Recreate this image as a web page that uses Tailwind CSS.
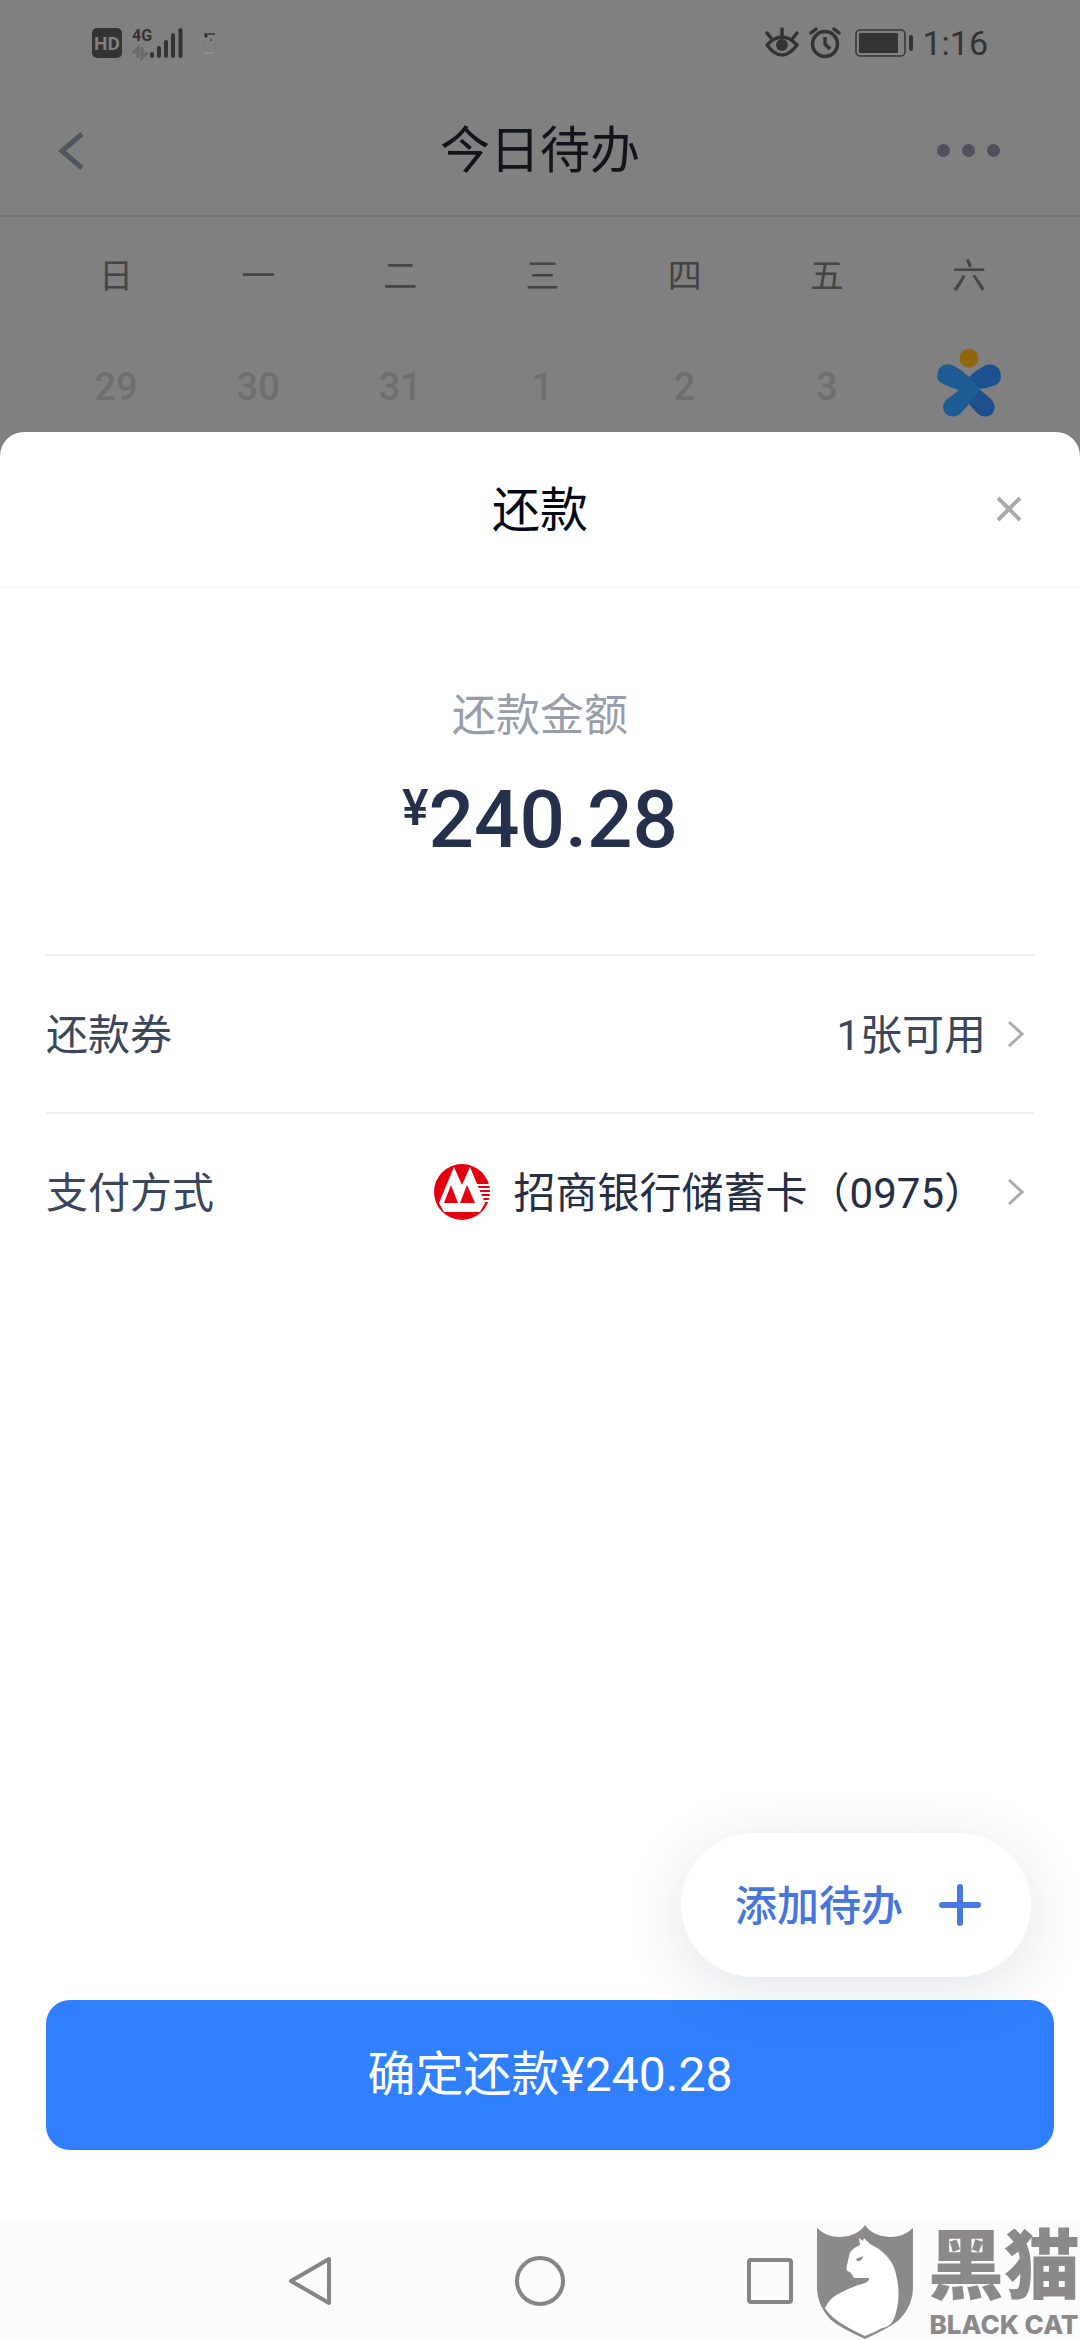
<!DOCTYPE html>
<html lang="zh-CN">
<head>
<meta charset="utf-8">
<meta name="viewport" content="width=device-width, initial-scale=1">
<title>还款</title>
<script src="https://cdn.jsdelivr.net/npm/@tailwindcss/browser@4"></script>
</head>
<body class="flex min-h-screen flex-col bg-[#808080] font-[Roboto,'Noto_Sans_CJK_SC',sans-serif]">

  <!-- Status bar -->
  <div class="flex h-[86px] items-center justify-between px-[92px] text-[#333]">
    <svg class="h-[38px] w-[124px]" viewBox="0 -4 124 38" aria-hidden="true">
      <rect width="30" height="30" rx="5" fill="#333"/>
      <text x="15" y="22" text-anchor="middle" font-family="Roboto" font-weight="700" font-size="19" fill="#808080">HD</text>
      <text x="50" y="13" text-anchor="middle" font-family="Roboto" font-weight="700" font-size="16" fill="#333">4G</text>
      <path d="M46 30V20l-5 5M50 19v11l6-6" fill="none" stroke="#6a6a6a" stroke-width="3"/>
      <path d="M60 26v2M67 20v8M74 14v14M81 7v21M88.500 2v26" stroke="#333" stroke-width="4" stroke-linecap="round"/>
      <path d="M112 6h11" stroke="#333" stroke-width="1.500"/>
      <circle cx="114" cy="8" r="1.500" fill="#222"/><circle cx="119" cy="12" r="1" fill="#444"/>
      <path d="M112 12v12M123 8v14" stroke="#7a7a7a" stroke-width="1"/>
      <path d="M112 25h10" stroke="#929292" stroke-width="1.500"/>
    </svg>
    <div class="flex items-center">
      <svg class="h-[32px] w-[150px]" viewBox="0 0 150 32" aria-hidden="true" fill="none" stroke="#333">
        <path d="M3 18Q18 2 33 18Q18 38 3 18Z" stroke-width="3.500" stroke-linejoin="round"/>
        <circle cx="18" cy="18" r="6" fill="#333" stroke="none"/>
        <path d="M18 8V2M7 11L3 6M29 11l4-5" stroke-width="3.500" stroke-linecap="round"/>
        <circle cx="61" cy="17" r="12.500" stroke-width="3.500"/>
        <path d="M61 10v7l5 5" stroke-width="3.500"/>
        <path d="M47 6l5-4M75 6l-5-4" stroke-width="3.500" stroke-linecap="round"/>
        <rect x="92" y="3" width="49" height="26" rx="4" stroke-width="1.500"/>
        <rect x="95" y="6" width="39" height="20" rx="1" fill="#333" stroke="none"/>
        <rect x="145" y="8" width="4" height="16" rx="2" fill="#333" stroke="none"/>
      </svg>
      <time class="ml-2 text-[34px] leading-10">1:16</time>
    </div>
  </div>

  <!-- Page header -->
  <header class="grid h-[131px] grid-cols-3 items-center border-b-2 border-[#777] px-[58px]">
    <button type="button" aria-label="返回" class="justify-self-start">
      <svg class="h-[38px] w-[27px]" viewBox="0 0 27 38"><path d="M24 2L4 19L24 36" fill="none" stroke="#51555f" stroke-width="5"/></svg>
    </button>
    <h1 class="justify-self-center text-[50px] leading-[60px] whitespace-nowrap text-[#12141c]">今日待办</h1>
    <button type="button" aria-label="更多" class="mr-[22px] flex gap-3 justify-self-end">
      <span class="size-[13px] rounded-full bg-[#4f525c]"></span>
      <span class="size-[13px] rounded-full bg-[#4f525c]"></span>
      <span class="size-[13px] rounded-full bg-[#4f525c]"></span>
    </button>
  </header>

  <!-- Calendar week -->
  <div class="h-[215px] pt-[34px] pr-10 pl-[45px]">
    <div class="grid grid-cols-7 text-center text-[34px] leading-[50px] text-[#444]">
      <span>日</span><span>一</span><span>二</span><span>三</span><span>四</span><span>五</span><span>六</span>
    </div>
    <div class="mt-11 grid h-[84px] grid-cols-7 items-center text-center text-[38px] leading-[50px] font-medium text-[#6e6e6e]">
      <span>29</span><span>30</span><span>31</span><span>1</span><span>2</span><span>3</span>
      <span class="flex justify-center pb-2">
        <svg class="h-[70px] w-16" viewBox="0 0 64 70" aria-label="4">
          <circle cx="32" cy="10" r="9.500" fill="#8f670b"/>
          <path d="M4 20Q9 14 17 18Q25 22 32 29L42 41Q47 45 54 51Q61 59 55 66Q48 71 41 66Q36 61 32 56Z" fill="#1c4f8c"/>
          <path d="M32 29Q39 22 47 18Q56 14 62 21Q67 32 59 37Q51 40 42 41L32 56Z" fill="#1c5090"/>
          <path d="M32 29Q24 22 16 18Q7 14 2 21Q-3 32 6 36Q15 40 22 42Q16 47 9 52Q3 59 9 66Q16 71 23 66Q28 61 32 56L43 41Z" fill="#1d5c93"/>
        </svg>
      </span>
    </div>
  </div>

  <!-- Repayment sheet -->
  <main class="flex flex-1 flex-col rounded-t-[24px] bg-white">
    <div class="grid h-[156px] grid-cols-[1fr_auto_1fr] items-center border-b-2 border-[#f7f7f7] px-[58px]">
      <h2 class="col-start-2 pt-1 text-[48px] leading-[60px] text-[#050818]">还款</h2>
      <button type="button" aria-label="关闭" class="justify-self-end">
        <svg class="size-[26px]" viewBox="0 0 26 26"><path d="M2 2L24 24M24 2L2 24" stroke="#aaa" stroke-width="4"/></svg>
      </button>
    </div>

    <section class="flex flex-col items-center pt-[98px] pb-[84px]">
      <p class="text-[44px] leading-[60px] text-[#979dab]">还款金额</p>
      <p class="mt-6 flex items-start font-medium text-[#24304c]">
        <span class="text-[50px] leading-[76px]">¥</span>
        <span class="text-[80px] leading-[100px]">240.28</span>
      </p>
    </section>

    <div class="mx-[46px] text-[42px] leading-[60px]">
      <button type="button" class="flex h-[158px] w-full items-center border-t-2 border-[#eee] pr-2 text-[#3a465b]">
        <span class="pt-1">还款券</span>
        <span class="ml-auto pt-1">1张可用</span>
        <svg class="ml-5 h-7 w-5" viewBox="0 0 20 28"><path d="M3 2L16 14L3 26" fill="none" stroke="#aaa" stroke-width="3"/></svg>
      </button>
      <button type="button" class="flex h-[158px] w-full items-center border-t-2 border-[#eee] pr-2 text-[#3a465b]">
        <span class="pt-1">支付方式</span>
        <svg class="ml-auto size-14" viewBox="0 0 56 56" aria-hidden="true">
          <circle cx="28" cy="28" r="28" fill="#e3000f"/>
          <path d="M20 3L5 39L10 48H46L51 39L36 3L28 21Z" fill="#fff"/>
          <path d="M17 21L10 39H24ZM33 21L26 39H41Z" fill="#e3000f"/>
          <path d="M43 21H56M44 25H56M46 29H56M47 33H56M49 37H56" stroke="#fff" stroke-width="2"/>
        </svg>
        <span class="ml-6 pt-1 text-[#242e45]">招商银行储蓄卡（0975）</span>
        <svg class="ml-5 h-7 w-5" viewBox="0 0 20 28"><path d="M3 2L16 14L3 26" fill="none" stroke="#aaa" stroke-width="3"/></svg>
      </button>
    </div>

    <div class="mt-auto flex flex-col pt-10 pb-[72px]">
      <button type="button" class="relative mr-[49px] flex h-36 items-center gap-9 self-end rounded-full bg-white pr-[50px] pl-[54px] text-[42px] leading-[60px] font-medium text-[#4676dc] shadow-[0_12px_60px_rgba(40,50,90,0.13)]">
        <span class="pt-1">添加待办</span>
        <svg class="size-[42px]" viewBox="0 0 42 42" aria-hidden="true"><path d="M21 3V39M3 21H39" stroke="#4878e6" stroke-width="6" stroke-linecap="round"/></svg>
      </button>
      <button type="button" class="mt-[23px] mr-[26px] ml-[46px] h-[150px] rounded-[24px] bg-[#307fff] text-[48px] leading-[60px] text-white">确定还款¥240.28</button>
    </div>
  </main>

  <!-- System navigation -->
  <nav class="relative flex h-[118px] items-center justify-center gap-[180px] bg-[#fcfcfc]">
    <button type="button" aria-label="后退"><svg class="size-[50px]" viewBox="0 0 50 50"><path d="M44 3V47L6 25Z" fill="none" stroke="#858585" stroke-width="4" stroke-linejoin="round"/></svg></button>
    <button type="button" aria-label="主屏幕"><svg class="size-[50px]" viewBox="0 0 50 50"><circle cx="25" cy="25" r="23" fill="none" stroke="#858585" stroke-width="4"/></svg></button>
    <button type="button" aria-label="最近任务"><svg class="size-[50px]" viewBox="0 0 50 50"><rect x="4" y="4" width="42" height="42" rx="2" fill="none" stroke="#858585" stroke-width="4"/></svg></button>

    <!-- Black Cat watermark -->
    <div class="absolute right-0 bottom-0 flex items-end gap-3.5 text-[#8b898a]">
      <svg class="h-[115px] w-[98px]" viewBox="0 0 98 115" aria-hidden="true">
        <path d="M1 3Q10 12 24 12Q42 11 49 0Q56 11 74 12Q88 12 97 3V63Q97 80 84 94Q77 101 49 114Q21 101 14 94Q1 80 1 63Z" fill="#8b898a"/>
        <path d="M43 13L47 16L48 13L54 19Q73 28 79 45Q87 73 77 96Q73 102 66 103Q59 107 49 111Q29 102 19 94Q11 87 9 83Q14 72 26 67Q38 61 46 59Q54 57 53 53L38 53Q36 49 34 47Q29 46 31 40L33 31Q34 24 44 20Z" fill="#fff"/>
        <path d="M40 34L47 31Q46 37 41 36Z" fill="#8b898a"/>
      </svg>
      <div class="flex flex-col items-center whitespace-nowrap">
        <span class="text-[76px] leading-[86px] font-black">黑猫</span>
        <span class="font-[Inter,sans-serif] text-[26px] leading-[30px] font-extrabold">BLACK CAT</span>
      </div>
    </div>
  </nav>
</body>
</html>
